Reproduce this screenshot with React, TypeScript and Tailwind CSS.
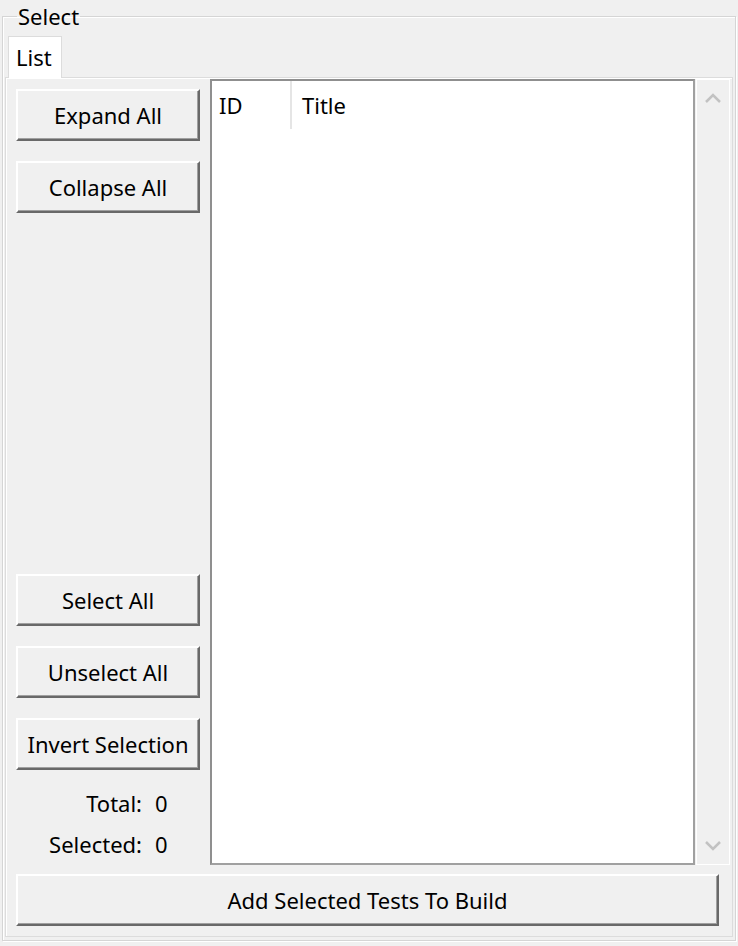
import React from 'react';

const font = { fontFamily: '"Noto Sans", "Open Sans", sans-serif' };

const WinButton: React.FC<{ label: string; className?: string }> = ({ label, className }) => (
    <button
        type="button"
        className={
            'flex items-center justify-center h-[52px] bg-[#f0f0f0] text-[22px] text-black border-2 border-t-white border-l-white border-r-[#696969] border-b-[#696969] shadow-[inset_-1px_-1px_0_#a0a0a0] ' +
            (className || '')
        }
    >
        {label}
    </button>
);

const ChevronUp = () => (
    <svg width="16" height="10" viewBox="0 0 16 10">
        <path d="M1 9 L8 2 L15 9" fill="none" stroke="#c2c2c2" strokeWidth="2.5" />
    </svg>
);

const ChevronDown = () => (
    <svg width="16" height="10" viewBox="0 0 16 10">
        <path d="M1 1 L8 8 L15 1" fill="none" stroke="#c2c2c2" strokeWidth="2.5" />
    </svg>
);

const App: React.FC = () => {
    const total = 0;
    const selected = 0;

    return (
        <div className="w-[738px] h-[946px] bg-[#f0f0f0] text-black overflow-hidden" style={font}>
            <fieldset className="ml-[2px] mr-[2px] w-[734px] h-[941px] border border-[#d5d5d5] shadow-[inset_1px_1px_0_#fff,1px_1px_0_#fff] px-[2px] pb-[3px] pt-0">
                <legend className="ml-[12px] px-[1px] text-[22px] leading-[32px]">Select</legend>

                {/* tab strip */}
                <div className="flex mt-[4px] ml-[3px]">
                    <div className="w-[54px] h-[42px] bg-white border border-b-0 border-[#dcdcdc] text-[22px] pl-[7px] pt-[5px] leading-[30px]">
                        List
                    </div>
                </div>

                {/* tab panel */}
                <div className="w-[728px] h-[860px] border border-[#dcdcdc] shadow-[inset_1px_1px_0_#fff] flex flex-col -mt-px">
                    <div className="flex pt-px">
                        {/* left column */}
                        <div className="w-[184px] ml-[10px] h-[786px] flex flex-col pt-[10px]">
                            <WinButton label="Expand All" className="w-[184px]" />
                            <WinButton label="Collapse All" className="w-[184px] mt-[20px]" />
                            <div className="flex-1" />
                            <div className="flex flex-col gap-[20px]">
                                <WinButton label="Select All" className="w-[184px]" />
                                <WinButton label="Unselect All" className="w-[184px]" />
                                <WinButton label="Invert Selection" className="w-[184px]" />
                            </div>
                            <div className="mt-[13px] flex flex-col text-[22px]">
                                <div className="h-[41px] flex items-center">
                                    <span className="w-[126px] text-right">Total:</span>
                                    <span className="ml-[13px]">{total}</span>
                                </div>
                                <div className="h-[41px] flex items-center">
                                    <span className="w-[126px] text-right">Selected:</span>
                                    <span className="ml-[13px]">{selected}</span>
                                </div>
                            </div>
                        </div>

                        {/* tree / list */}
                        <div className="ml-[10px] w-[485px] h-[786px] bg-white border-2 border-[#a0a0a0] border-t-[#8f8f8f] border-l-[#8f8f8f] flex flex-col">
                            <div className="flex h-[48px] text-[22px] leading-[48px]">
                                <div className="w-[80px] pl-[7px] border-r-2 border-[#e5e5e5]">ID</div>
                                <div className="flex-1 pl-[10px]">Title</div>
                            </div>
                        </div>

                        {/* scrollbar */}
                        <div className="ml-px w-[34px] h-[786px] border border-white bg-[#f0f0f0] flex flex-col items-center justify-between py-[13px]">
                            <ChevronUp />
                            <ChevronDown />
                        </div>
                    </div>

                    <WinButton label="Add Selected Tests To Build" className="ml-[10px] mt-[9px] w-[703px]" />
                </div>
            </fieldset>
        </div>
    );
};

export default App;
